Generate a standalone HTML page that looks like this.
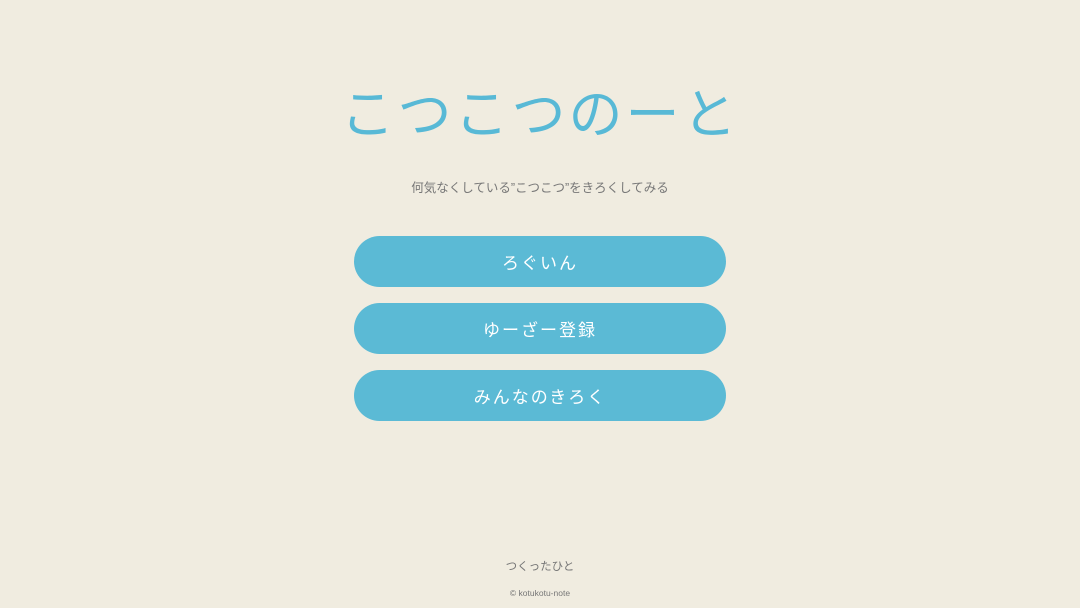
<!DOCTYPE html>
<html><head><meta charset="utf-8"><style>
body{margin:0;width:1080px;height:608px;background:#f0ece0;font-family:"Liberation Sans","Noto Sans CJK JP",sans-serif;position:relative;overflow:hidden}
.t{position:absolute;top:80px;left:0;width:1080px;text-align:center;font-size:54px;letter-spacing:3px;color:#58b9d6;line-height:70px;font-weight:400}
.s{position:absolute;top:179px;width:1080px;text-align:center;font-size:12.5px;color:#777;line-height:18px}
.b{position:absolute;left:354px;width:372px;height:51px;border-radius:26px;background:#5bbad5;color:#fff;text-align:center;line-height:55px;font-size:17px;letter-spacing:2px}
.f{position:absolute;width:1080px;text-align:center;color:#777}
</style></head><body>
<div class="t">こつこつのーと</div>
<div class="s">何気なくしている”こつこつ”をきろくしてみる</div>
<div class="b" style="top:236px">ろぐいん</div>
<div class="b" style="top:303px">ゆーざー登録</div>
<div class="b" style="top:370px">みんなのきろく</div>
<div class="f" style="top:558px;font-size:11.5px">つくったひと</div>
<div class="f" style="top:588px;font-size:8.5px">© kotukotu-note</div>
</body></html>
